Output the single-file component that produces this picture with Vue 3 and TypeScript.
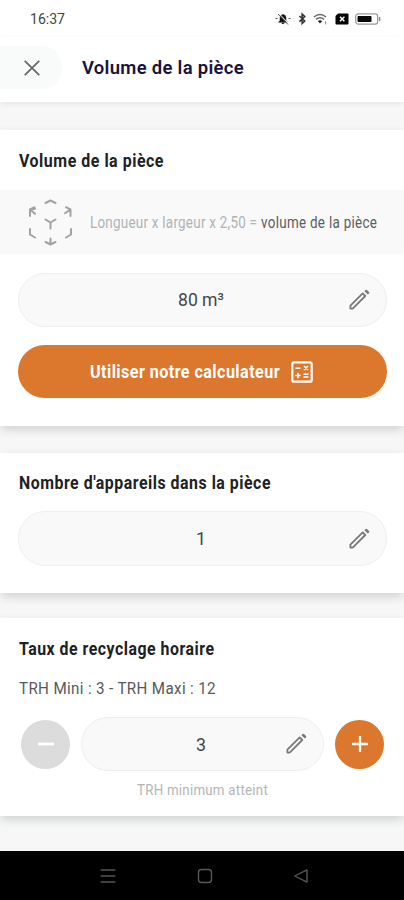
<script setup lang="ts">
import { h, ref, computed } from 'vue'
import type { FunctionalComponent } from 'vue'

interface LabelProps {
  text: string
  width: number
}

// Single line of type fitted to a fixed advance width (condensed look).
const FitLabel: FunctionalComponent<LabelProps> = (props) =>
  h('svg', { width: props.width, height: 24, role: 'img', 'aria-label': props.text }, [
    h('text', { x: 0, y: 18, textLength: props.width, lengthAdjust: 'spacingAndGlyphs' }, props.text),
  ])
FitLabel.props = ['text', 'width']

const PencilIcon: FunctionalComponent = () =>
  h('svg', { width: 24, height: 24, viewBox: '0 0 24 24' }, [
    h('path', {
      d: 'M3.400 18.600L15.700 6.400l2.600 2.600L6.200 21.200q-.4.4-1 .4H3.400z',
      fill: 'none',
      stroke: 'currentColor',
      'stroke-width': 1.8,
      'stroke-linejoin': 'round',
    }),
    h('path', { d: 'M17.400 4.200l1.200-1.200q.7-.6 1.400 0l2 2q.6.7 0 1.400l-1.200 1.200z', fill: 'currentColor' }),
  ])

const volume = ref(80)
const devices = ref(1)
const rate = ref(3)
const minRate = 3
const maxRate = 12
const atMin = computed(() => rate.value <= minRate)

function step(delta: number): void {
  rate.value = Math.min(maxRate, Math.max(minRate, rate.value + delta))
}
</script>

<template>
  <div class="screen">
    <div class="status">
      <FitLabel class="clock" text="16:37" :width="35" />
      <div class="status-icons">
        <svg width="16" height="14" viewBox="0 0 16 14">
          <path d="M3.600 10.200L5 8.500V6q0-3 3-3.400Q11 3 11 6v2.500l1.400 1.700zM6.700 11h2.600q-1.300 1.800-2.600 0z" fill="#111" stroke="#222" stroke-width=".6" />
          <path d="M4 1.500l10 10.500" stroke="#fff" stroke-width="1" />
          <path d="M3 2l10 10.500M.5 6.500h2M13.500 6.500h2" stroke="#555" />
        </svg>
        <svg width="9" height="14" viewBox="0 0 9 14">
          <path d="M1.400 4l5.400 5-2.700 2.600V2l2.700 2.600-5.400 5" fill="none" stroke="#333" stroke-width="1.500" />
        </svg>
        <svg width="15" height="14" viewBox="0 0 15 14">
          <path d="M1 5q6-5 12 0M3 7.400q4-3.400 8 0" fill="none" stroke="#666" stroke-width="1.500" />
          <path d="M4.800 9q2.200-1.700 4.400 0L7 11.400z" fill="#222" />
          <path d="M12.500 9v3.500" stroke="#999" />
        </svg>
        <svg width="14" height="12" viewBox="0 0 14 12">
          <path d="M3 .5h9.500q1 0 1 1v9q0 1-1 1h-11q-1 0-1-1V3z" fill="#000" />
          <path d="M5 3.800l4.400 4.400M9.400 3.800L5 8.200" stroke="#fff" stroke-width="1.500" />
        </svg>
        <svg width="26" height="12" viewBox="0 0 26 12">
          <rect x=".7" y=".8" width="22" height="10.400" rx="2.600" fill="#fff" stroke="#999" stroke-width="1.200" />
          <rect x="2.500" y="2.900" width="14" height="6.200" rx="1" fill="#080808" />
          <path d="M24.600 4v4" stroke="#888" stroke-width="1.400" />
        </svg>
      </div>
    </div>

    <header class="bar">
      <button class="close" aria-label="Fermer">
        <svg width="18" height="18" viewBox="0 0 18 18">
          <path d="M1.800 1.800l14.400 14.400M16.200 1.800L1.800 16.200" stroke="#696b6d" stroke-width="1.900" />
        </svg>
      </button>
      <FitLabel class="title" text="Volume de la pièce" :width="162" />
    </header>

    <main class="content">
      <section class="card volume">
        <FitLabel class="heading" text="Volume de la pièce" :width="145" />
        <div class="hint">
          <svg class="cube" width="46" height="50" viewBox="0 0 46 50">
            <g fill="none" stroke="#a0a2a4" stroke-width="2" stroke-linecap="round" stroke-linejoin="round">
              <path d="M18.500 6l5-2.500 5 2.500" />
              <path d="M3 19v-6.500l5-.8M3 12.500l5 4.300M3 12.500l4.500-2.300" />
              <path d="M39 10.200l4.500 2.300v6.500M43.500 12.500l-5.500 3.800" />
              <path d="M18.500 22.500l5 3 5-3M23.500 25.500v6" />
              <path d="M3 32v5.500l5 3" />
              <path d="M44 32v5.500l-5 3" />
              <path d="M18.500 45l5 2.500 5-2.500M23.500 41.500v6" />
            </g>
          </svg>
          <svg class="formula" width="287" height="24">
            <g transform="scale(0.84 1)">
              <text x="0" y="18" textLength="198.800" lengthAdjust="spacing">Longueur x largeur x 2,50 =</text>
              <text class="strong" x="203.600" y="18" textLength="138" lengthAdjust="spacing">volume de la pièce</text>
            </g>
          </svg>
        </div>
        <div class="field">
          <FitLabel class="value" :text="`${volume} m³`" :width="46" />
          <PencilIcon class="pencil" />
        </div>
        <button class="calc">
          <FitLabel class="calc-text" text="Utiliser notre calculateur" :width="190" />
          <svg width="22" height="22" viewBox="0 0 22 22">
            <rect x="1.300" y="1.300" width="19.400" height="19.400" rx="1.800" fill="none" stroke="#fff" stroke-width="2.200" />
            <path d="M4.500 7.300h5M4.300 14.500h5.400M7 11.800v5.400M12.500 13.200h5M12.500 16h5M13 5l4 4M17 5l-4 4" stroke="#fff" stroke-width="1.600" />
          </svg>
        </button>
      </section>

      <section class="card devices">
        <FitLabel class="heading" text="Nombre d'appareils dans la pièce" :width="252" />
        <div class="field">
          <FitLabel class="value" :text="`${devices}`" :width="10" />
          <PencilIcon class="pencil" />
        </div>
      </section>

      <section class="card rate">
        <FitLabel class="heading" text="Taux de recyclage horaire" :width="195.500" />
        <FitLabel class="range" :text="`TRH Mini : ${minRate} - TRH Maxi : ${maxRate}`" :width="197" />
        <div class="stepper">
          <button class="round" :class="{ off: atMin }" aria-label="Diminuer" @click="step(-1)">
            <svg width="18" height="18" viewBox="0 0 18 18">
              <path d="M1 9h16" stroke="#fff" stroke-width="2.800" />
            </svg>
          </button>
          <div class="field">
            <FitLabel class="value" :text="`${rate}`" :width="10" />
            <PencilIcon class="pencil" />
          </div>
          <button class="round" aria-label="Augmenter" @click="step(1)">
            <svg width="18" height="18" viewBox="0 0 18 18">
              <path d="M1 9h16M9 1v16" stroke="#fff" stroke-width="2.300" />
            </svg>
          </button>
        </div>
        <FitLabel v-if="atMin" class="note" text="TRH minimum atteint" :width="131" />
      </section>
    </main>

    <nav class="nav">
      <svg width="16" height="16" viewBox="0 0 16 16">
        <path d="M.7 2h14.600M.7 8h14.600M.7 14h14.600" stroke="#575757" stroke-width="1.600" />
      </svg>
      <svg width="16" height="16" viewBox="0 0 16 16">
        <rect x="1.500" y="1.500" width="13" height="13" rx="3" fill="none" stroke="#575757" stroke-width="1.400" />
      </svg>
      <svg width="16" height="16" viewBox="0 0 16 16">
        <path d="M14 1.800v12.400L1.800 8z" fill="none" stroke="#575757" stroke-width="1.400" stroke-linejoin="round" />
      </svg>
    </nav>
  </div>
</template>

<style>
body {
  margin: 0;
}
</style>

<style scoped>
.screen {
  width: 404px;
  height: 900px;
  display: flex;
  flex-direction: column;
  overflow: hidden;
  background: #f7f7f7;
  font-family: Roboto, 'Liberation Sans', sans-serif;
}
svg {
  display: block;
  flex: none;
  overflow: visible;
}
button {
  border: 0;
  padding: 0;
  font: inherit;
}
.status {
  height: 37px;
  box-sizing: border-box;
  padding: 6px 23px 0 30px;
  display: flex;
  justify-content: space-between;
  background: #fff;
}
.clock {
  font-size: 14px;
  fill: #444;
}
.status-icons {
  display: flex;
  align-items: center;
  gap: 6.5px;
  height: 25px;
}
.bar {
  height: 65px;
  box-sizing: border-box;
  padding-top: 9px;
  display: flex;
  align-items: flex-start;
  gap: 20px;
  background: #fff;
  box-shadow: 0 2px 5px rgba(0, 0, 0, 0.07);
}
.close {
  width: 62px;
  height: 43px;
  border-radius: 0 20px 20px 0;
  background: #f9fafa;
  display: flex;
  align-items: center;
  padding-left: 23px;
}
.title {
  margin-top: 10px;
  font-size: 18.3px;
  font-weight: 600;
  letter-spacing: 0.3px;
  fill: #17133d;
}
.content {
  flex: 1;
  padding-top: 28px;
  display: flex;
  flex-direction: column;
}
.card {
  box-sizing: border-box;
  display: flex;
  flex-direction: column;
  padding: 19px 17px 0 18px;
  background: #fff;
  box-shadow: 0 4px 10px -1px rgba(30, 45, 50, 0.2);
}
.volume {
  height: 296px;
}
.devices {
  height: 140px;
  margin-top: 27px;
  padding-top: 18px;
}
.rate {
  height: 198px;
  margin-top: 25px;
}
.heading {
  margin-left: 1px;
  font-size: 18.5px;
  font-weight: 700;
  letter-spacing: 0.6px;
  fill: #202124;
}
.hint {
  height: 64px;
  margin: 17px -17px 19px -18px;
  padding-left: 27px;
  display: flex;
  align-items: center;
  background: #f9f9f9;
}
.formula {
  margin-left: 17px;
  font-size: 16px;
  fill: #b0b3b6;
}
.strong {
  fill: #5c5e61;
}
.field {
  position: relative;
  box-sizing: border-box;
  height: 54px;
  display: flex;
  align-items: center;
  justify-content: center;
  padding-right: 4px;
  border: 1px solid #efefef;
  border-radius: 27px;
  background: #f9f9f9;
}
.value {
  font-size: 18px;
  fill: #444649;
}
.pencil {
  position: absolute;
  right: 15px;
  top: 13px;
  color: #77797b;
}
.calc {
  height: 53px;
  padding-right: 2px;
  margin-top: 18px;
  border-radius: 27px;
  background: #dc782e;
  display: flex;
  align-items: center;
  justify-content: center;
  gap: 11px;
}
.calc-text {
  font-size: 18.5px;
  font-weight: 700;
  letter-spacing: 0.5px;
  fill: #fff;
}
.devices .field {
  height: 55px;
  margin-top: 16px;
}
.devices .pencil {
  top: 14px;
}
.range {
  margin: 15px 0 0 1px;
  font-size: 17px;
  letter-spacing: 0.4px;
  fill: #57595c;
}
.stepper {
  display: flex;
  align-items: center;
  justify-content: space-between;
  margin: 17px 3px 0;
}
.stepper .field {
  width: 243px;
}
.stepper .value {
  margin-top: 1px;
}
.round {
  width: 49px;
  height: 49px;
  border-radius: 50%;
  background: #dc782e;
  display: flex;
  align-items: center;
  justify-content: center;
}
.round.off {
  background: #dcdcdc;
}
.note {
  align-self: center;
  margin-top: 6px;
  font-size: 15.5px;
  letter-spacing: 0.3px;
  fill: #b3b5b7;
}
.nav {
  height: 49px;
  box-sizing: border-box;
  padding-left: 5px;
  display: flex;
  align-items: center;
  justify-content: center;
  gap: 80.5px;
  background: #000;
}
</style>
